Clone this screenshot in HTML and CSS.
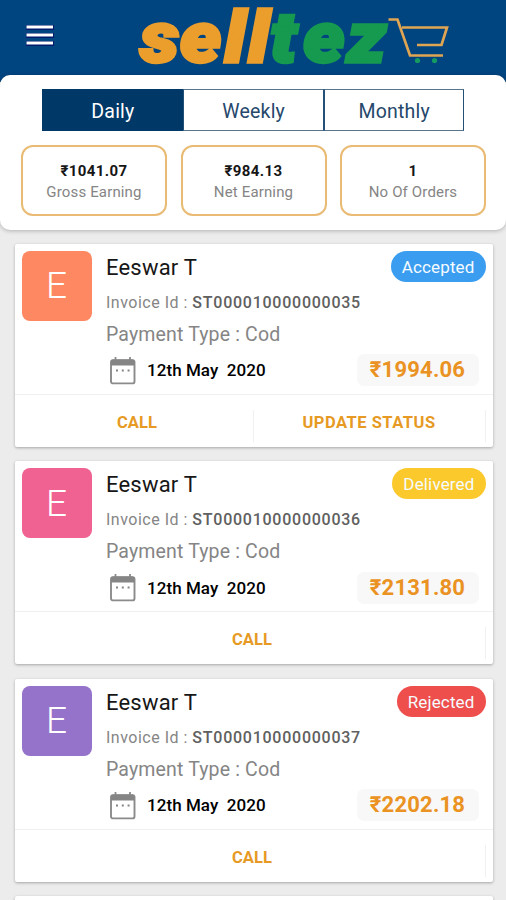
FILE: index.html
```html
<!DOCTYPE html>
<html lang="en">
<head>
<meta charset="utf-8">
<title>selltez</title>
<link rel="stylesheet" href="styles.css">
</head>
<body>
<svg class="defs" width="0" height="0" aria-hidden="true">
  <symbol id="calendar" viewBox="0 0 26 29">
    <path d="M5.500 1v5M20 1v5" stroke="#8b8b8b" stroke-width="1.800"/>
    <rect x="1" y="4.100" width="23.500" height="23.300" rx="2" fill="#fff" stroke="#8b8b8b" stroke-width="1.900"/>
    <path d="M1 5.500Q1 3.500 3 3.500H22.500Q24.500 3.500 24.500 5.500V9.500H1Z" fill="#858585"/>
    <path d="M6 14.500h2M11.800 14.500h2M17.600 14.500h2" stroke="#858585" stroke-width="2"/>
  </symbol>
</svg>
<header class="topbar">
  <svg class="menu" width="28" height="22" viewBox="0 0 28 22"><path d="M0 3.500H28M0 11.500H28M0 19.500H28" stroke="#00196b" stroke-width="5"/><path d="M0.500 3H27M0.500 11H27M0.500 19H27" stroke="#fff" stroke-width="3"/></svg>
  <svg class="logo" width="320" height="74" viewBox="0 0 320 74">
    <g transform="scale(1.1 1)">
      <text class="logo-sell" x="5.800 42 82.600 104" y="61.500">sell</text>
      <text class="logo-tez" x="124 154 194" y="61.500">tez</text>
    </g>
    <path d="M254.500 19.500H263.500L276 55.500H309M268 27.500H313L307.500 45H283" fill="none" stroke="#dfa552" stroke-width="2.700"/>
    <circle cx="283.500" cy="60.500" r="2.600" fill="#159a61"/><circle cx="300.500" cy="60.500" r="2.600" fill="#159a61"/>
  </svg>
</header>
<section class="summary">
  <nav class="tabs"><span class="tab active">Daily</span><span class="tab">Weekly</span><span class="tab">Monthly</span></nav>
  <div class="stats">
    <div class="stat"><b>₹1041.07</b><span>Gross Earning</span></div>
    <div class="stat"><b>₹984.13</b><span>Net Earning</span></div>
    <div class="stat"><b>1</b><span>No Of Orders</span></div>
  </div>
</section>
<main class="orders">
  <article class="card">
    <div class="body">
      <div class="avatar orange">E</div>
      <div class="info">
        <div class="head"><h2>Eeswar T</h2><span class="badge accepted">Accepted</span></div>
        <p class="invoice">Invoice Id : <b>ST000010000000035</b></p>
        <p class="payment">Payment Type : Cod</p>
        <div class="foot"><svg class="cal" width="26" height="29"><use href="#calendar"/></svg><span class="date">12th May&nbsp; 2020</span><span class="amount">₹1994.06</span></div>
      </div>
    </div>
    <div class="actions"><span class="call">CALL</span><span class="update">UPDATE STATUS</span></div>
  </article>
  <article class="card">
    <div class="body">
      <div class="avatar pink">E</div>
      <div class="info">
        <div class="head"><h2>Eeswar T</h2><span class="badge delivered">Delivered</span></div>
        <p class="invoice">Invoice Id : <b>ST000010000000036</b></p>
        <p class="payment">Payment Type : Cod</p>
        <div class="foot"><svg class="cal" width="26" height="29"><use href="#calendar"/></svg><span class="date">12th May&nbsp; 2020</span><span class="amount">₹2131.80</span></div>
      </div>
    </div>
    <div class="actions"><span>CALL</span></div>
  </article>
  <article class="card">
    <div class="body">
      <div class="avatar purple">E</div>
      <div class="info">
        <div class="head"><h2>Eeswar T</h2><span class="badge rejected">Rejected</span></div>
        <p class="invoice">Invoice Id : <b>ST000010000000037</b></p>
        <p class="payment">Payment Type : Cod</p>
        <div class="foot"><svg class="cal" width="26" height="29"><use href="#calendar"/></svg><span class="date">12th May&nbsp; 2020</span><span class="amount">₹2202.18</span></div>
      </div>
    </div>
    <div class="actions"><span>CALL</span></div>
  </article>
  <article class="card next"></article>
</main>
</body>
</html>
```
FILE: styles.css
```css
* { box-sizing: border-box; }
body { margin: 0; height: 900px; overflow: hidden; background: #ececec; font-family: Roboto, "Noto Sans", sans-serif; color: #161616; }
.defs { display: block; }
.topbar { display: flex; height: 82px; background: #004480; }
.menu { margin: 24px 0 0 26px; flex: none; }
.logo { margin-left: 80px; flex: none; overflow: visible; }
.logo text { font-weight: 900; font-style: italic; font-size: 70px; stroke-width: 3.5; }
.logo-sell { fill: #eb9e2b; stroke: #eb9e2b; }
.logo-tez { fill: #159a50; stroke: #159a50; }
.summary { position: relative; height: 155px; margin-top: -7px; padding: 14px 21px 0; background: #fff; border-radius: 10px; box-shadow: 0 1px 4px rgba(0,0,0,.25); }
.tabs { display: grid; grid-template-columns: 141px 140.500px 140.500px; height: 42px; margin-left: 21.400px; }
.tab { display: flex; align-items: center; justify-content: center; border: 1px solid #58758b; border-right-color: #245078; font-size: 19.500px; letter-spacing: .2px; color: #25486b; padding-top: 2px; }
.tab + .tab { border-left-color: #245078; }
.tab.active { background: #003868; color: #fff; border-color: #003868; }
.stats { display: grid; grid-template-columns: repeat(3, 146px); column-gap: 13.500px; margin-top: 14px; }
.stat { height: 71px; border: 2px solid #e9bb74; border-radius: 12px; display: flex; flex-direction: column; align-items: center; padding-top: 14px; }
.stat b { font-size: 15px; line-height: 21px; font-weight: 700; letter-spacing: .4px; }
.stat span { font-size: 15px; line-height: 21px; letter-spacing: .15px; color: #858585; }
.orders { display: grid; row-gap: 14.500px; padding: 13.500px 13.500px 0 14.500px; }
.card { height: 203px; background: #fff; border-radius: 2px; box-shadow: 0 1px 3px rgba(0,0,0,.3); }
.card.next { height: 20px; margin-bottom: -20px; }
.body { display: flex; height: 151px; padding: 7px 7px 0; border-bottom: 1px solid #f0f0f0; }
.avatar { width: 70px; height: 70px; flex: none; border-radius: 8px; display: flex; align-items: center; justify-content: center; font-size: 37px; font-weight: 300; color: #fff; }
.orange { background: #fe8862; } .pink { background: #f06292; } .purple { background: #9573ca; }
.info { flex: 1; margin-left: 14.500px; min-width: 0; }
.head { display: flex; justify-content: space-between; height: 33px; }
h2 { margin: 0; font-size: 22px; line-height: 34px; font-weight: 400; letter-spacing: .2px; }
.badge { height: 31px; border-radius: 16px; padding: 1px 11px 0; color: #f5fbff; font-size: 17px; line-height: 31px; letter-spacing: .15px; }
.accepted { background: #3a9df0; } .delivered { background: #fbc92b; } .rejected { background: #ee4e4c; }
p { margin: 0; color: #858585; }
.invoice { height: 36px; font-size: 16px; line-height: 37px; letter-spacing: .5px; }
.invoice b { font-weight: 500; color: #606060; letter-spacing: .75px; }
.payment { height: 29px; font-size: 19.500px; line-height: 30px; letter-spacing: .15px; }
.foot { display: flex; align-items: center; height: 43px; padding-right: 7px; }
.cal { margin-left: 4px; flex: none; }
.date { margin-left: 11px; font-size: 17px; font-weight: 500; letter-spacing: .05px; color: #000; }
.amount { margin-left: auto; width: 122px; height: 32px; border-radius: 7px; background: #f8f8f8; text-align: center; line-height: 32px; font-size: 22px; font-weight: 700; letter-spacing: .2px; color: #ea9222; }
.actions { display: flex; height: 52px; padding: 15px 7px 5px 5px; }
.actions span { flex: 1; border-right: 1px solid #f0f0f0; text-align: center; font-size: 16.500px; font-weight: 700; line-height: 25px; color: #e69a24; letter-spacing: .1px; }
.actions .call { padding-left: 2px; }
.actions .update { letter-spacing: .5px; }
```
